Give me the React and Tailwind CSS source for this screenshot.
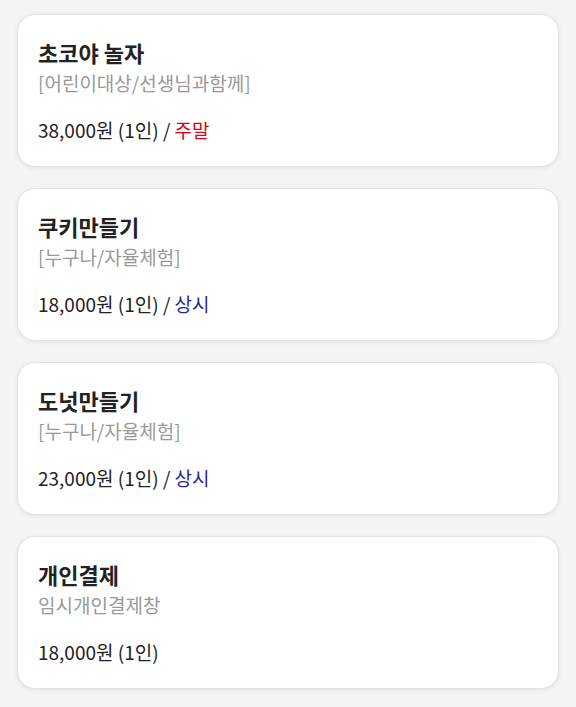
const items = [
  { title: '초코야 놀자', sub: '[어린이대상/선생님과함께]', price: '38,000원 (1인)', tag: '주말', tagColor: 'text-[#e0001b]' },
  { title: '쿠키만들기', sub: '[누구나/자율체험]', price: '18,000원 (1인)', tag: '상시', tagColor: 'text-[#2a1f9c]' },
  { title: '도넛만들기', sub: '[누구나/자율체험]', price: '23,000원 (1인)', tag: '상시', tagColor: 'text-[#2a1f9c]' },
  { title: '개인결제', sub: '임시개인결제창', price: '18,000원 (1인)' },
]

export default function App() {
  return (
    <div
      className="min-h-[707px] bg-[#f4f4f4] px-[17px] pt-[14px] pb-[19px] flex flex-col gap-[21px]"
      style={{ fontFamily: '"Noto Sans CJK KR", "Noto Sans", sans-serif' }}
    >
      {items.map((it) => (
        <div
          key={it.title}
          className="h-[153px] bg-white rounded-[18px] border border-[#e2e2e2] shadow-[0_1px_4px_rgba(0,0,0,0.08)] px-[20px] pt-[22px]"
        >
          <div className="text-[22px] leading-[30px] font-bold text-[#222]">{it.title}</div>
          <div className="text-[19px] leading-[26px] text-[#999] mt-[3px]">{it.sub}</div>
          <div className="text-[19px] leading-[26px] text-[#222] mt-[21px]">
            {it.price}
            {it.tag && (
              <>
                {' / '}
                <span className={it.tagColor}>{it.tag}</span>
              </>
            )}
          </div>
        </div>
      ))}
    </div>
  )
}
